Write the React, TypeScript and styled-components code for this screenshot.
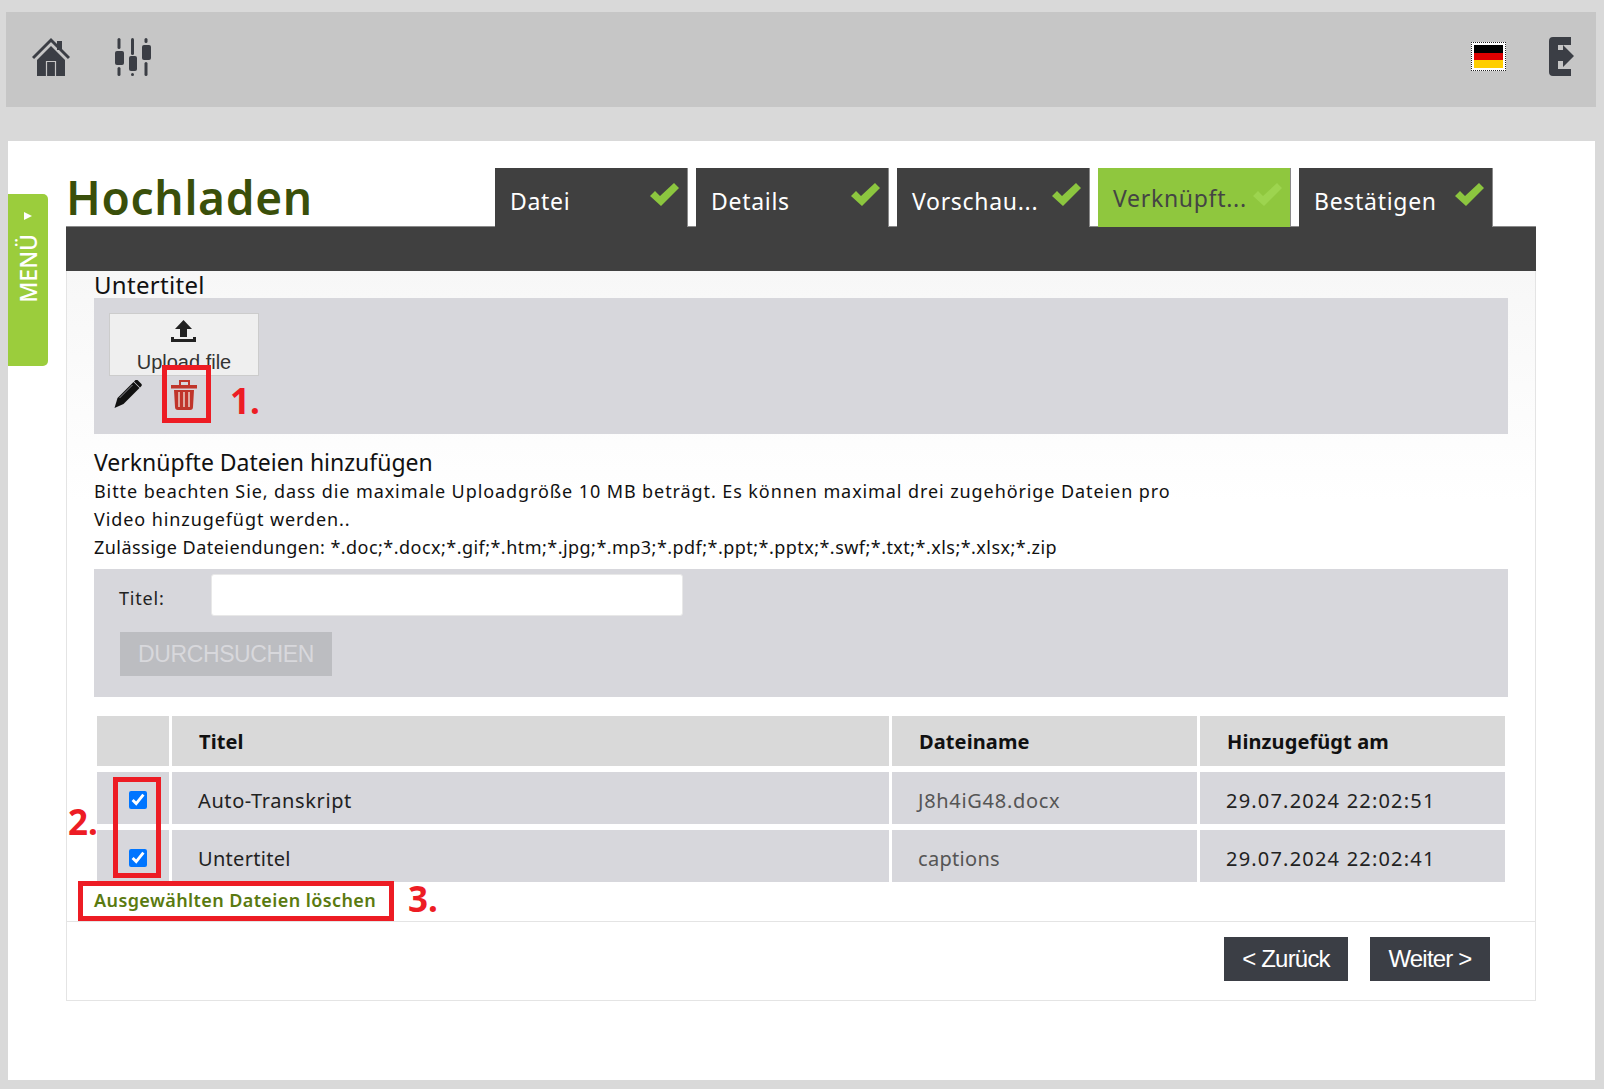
import React from "react";
import styled, { createGlobalStyle } from "styled-components";

const GlobalStyle = createGlobalStyle`
  html, body {
    margin: 0;
    padding: 0;
    background: #d9d9d9;
    font-family: "Noto Sans", "Open Sans", sans-serif;
  }
  * { box-sizing: border-box; }
`;

const Page = styled.div`
  width: 1604px;
  height: 1089px;
  overflow: hidden;
  padding-top: 12px;
`;

const TopBar = styled.header`
  display: flex;
  align-items: flex-start;
  width: 1590px;
  height: 95px;
  margin-left: 6px;
  padding-top: 25px;
  background: #c6c6c6;
`;

const TopLeft = styled.div`
  display: flex;
  gap: 45px;
  margin-left: 26px;
`;

const TopRight = styled.div`
  display: flex;
  margin-left: auto;
  margin-right: 22px;
`;

const Flag = styled.div`
  width: 35px;
  height: 29px;
  margin: 5px 43px 0 0;
  border: 1px dotted #222;
  padding: 2px;
  background: #fff;
  &::before {
    content: "";
    display: block;
    height: 100%;
    background: linear-gradient(#000 33%, #dd0000 33%, #dd0000 67%, #ffce00 67%);
  }
`;

const Card = styled.main`
  display: flex;
  align-items: flex-start;
  width: 1587px;
  height: 939px;
  margin: 34px 0 0 8px;
  background: #fff;
`;

const SideTab = styled.div`
  display: flex;
  flex-direction: column;
  align-items: center;
  flex: none;
  width: 40px;
  height: 172px;
  margin-top: 53px;
  padding-top: 18px;
  gap: 14px;
  background: #9bcd3c;
  border-radius: 0 5px 5px 0;
  color: #fff;
`;

const SideArrow = styled.span`
  width: 0;
  height: 0;
  border-left: 8px solid #fff;
  border-top: 4px solid transparent;
  border-bottom: 4px solid transparent;
`;

const SideLabel = styled.span`
  writing-mode: vertical-rl;
  transform: rotate(180deg);
  font-size: 23px;
  font-weight: 500;
  line-height: 1;
`;

const Main = styled.div`
  width: 1470px;
  margin-left: 18px;
  padding-top: 27px;
`;

const HeaderRow = styled.div`
  display: flex;
  height: 59px;
  border-bottom: 1px solid #8a8a8a;
`;

const Title = styled.h1`
  width: 429px;
  margin: 0;
  font-size: 46px;
  font-weight: 600;
  letter-spacing: 0.7px;
  line-height: 58px;
  color: #3a4f0a;
`;

const Tabs = styled.div`
  display: flex;
  gap: 8px;
  height: 59px;
`;

const Tab = styled.div<{ $active?: boolean }>`
  display: flex;
  justify-content: space-between;
  width: 193px;
  padding: ${({ $active }) => ($active ? "13px" : "16px")} 8px 0 15px;
  background: ${({ $active }) => ($active ? "#8fc73e" : "#404040")};
  border-right: 1px solid #8a8a8a;
  color: ${({ $active }) => ($active ? "#444" : "#fff")};
  font-size: 23px;
  letter-spacing: 0.7px;
  line-height: 34px;
  &:last-child {
    width: 194px;
  }
`;

const TabCheck = styled.svg<{ $active?: boolean }>`
  width: 29px;
  height: 23px;
  margin-top: ${({ $active }) => ($active ? "2px" : "-1px")};
  fill: ${({ $active }) => ($active ? "#9dd44f" : "#8cc63f")};
`;

const Band = styled.div`
  height: 44px;
  background: #404040;
`;

const Box = styled.div`
  border: 1px solid #e4e4e4;
  border-top: 0;
  background: linear-gradient(#f7f7f7, #fff 230px);
`;

const Body = styled.div`
  padding: 0 27px;
`;

const FieldLabel = styled.div`
  height: 27px;
  font-size: 24px;
  letter-spacing: 0.3px;
  line-height: 27px;
  color: #111;
`;

const UploadPanel = styled.div`
  position: relative;
  height: 136px;
  padding: 15px;
  background: #d7d7dc;
`;

const UploadButton = styled.div`
  display: flex;
  flex-direction: column;
  align-items: center;
  width: 150px;
  height: 63px;
  padding-top: 6px;
  background: #efefef;
  border: 1px solid #ccc;
  font-family: "Liberation Sans", Arial, sans-serif;
  font-size: 20px;
  line-height: 26px;
  color: #333;
`;

const UploadIcon = styled.svg`
  width: 25px;
  height: 22px;
  margin: 0 2px 7px 0;
`;

const Actions = styled.div`
  display: flex;
  gap: 29px;
  margin: 4px 0 0 5px;
`;

const RedBox = styled.div`
  position: absolute;
  border: 5px solid #ed1c24;
`;

const TrashBox = styled(RedBox)`
  left: 68px;
  top: 67px;
  width: 49px;
  height: 58px;
`;

const CheckBox2 = styled(RedBox)`
  left: 19px;
  top: 67px;
  width: 48px;
  height: 101px;
`;

const LinkBox = styled(RedBox)`
  left: -16px;
  top: -1px;
  width: 316px;
  height: 40px;
`;

const Callout = styled.span`
  position: absolute;
  color: #ed1c24;
  font-size: 35px;
  font-weight: 700;
  line-height: 35px;
`;

const Callout1 = styled(Callout)`
  left: 136px;
  top: 85px;
`;

const Callout2 = styled(Callout)`
  left: -26px;
  top: 94px;
`;

const Callout3 = styled(Callout)`
  left: 314px;
  top: -1px;
`;

const Section = styled.h2`
  margin: 13px 0 0;
  font-size: 23px;
  font-weight: 400;
  line-height: 30px;
  color: #111;
`;

const Note = styled.p<{ $spacing: number }>`
  margin: 0;
  width: 1100px;
  font-size: 18px;
  letter-spacing: ${({ $spacing }) => $spacing}px;
  line-height: 28px;
  color: #111;
`;

const SearchPanel = styled.div`
  height: 128px;
  margin-top: 8px;
  padding: 5px 0 0 25px;
  background: #d7d7dc;
`;

const SearchRow = styled.div`
  display: flex;
  align-items: center;
  height: 42px;
`;

const SearchLabel = styled.label`
  width: 92px;
  padding-top: 6px;
  font-size: 18px;
  letter-spacing: 0.8px;
  color: #222;
`;

const SearchInput = styled.input`
  width: 472px;
  height: 42px;
  border: 1px solid #e8e8e8;
  border-radius: 3px;
  background: #fff;
  outline: none;
`;

const SearchButton = styled.button`
  display: block;
  width: 212px;
  height: 44px;
  margin: 16px 0 0 1px;
  padding: 0;
  border: 0;
  background: #bcbdc1;
  color: #d8d8dc;
  font-family: "Liberation Sans", Arial, sans-serif;
  font-size: 23px;
  letter-spacing: -0.4px;
`;

const FilesWrap = styled.div`
  position: relative;
`;

const FileTable = styled.table`
  width: 1414px;
  margin: 13px 0 -6px;
  table-layout: fixed;
  border-collapse: separate;
  border-spacing: 3px 6px;
`;

const HeadCell = styled.th`
  height: 50px;
  padding: 0 0 0 27px;
  background: #d9d9d9;
  text-align: left;
  font-size: 20px;
  font-weight: 700;
  letter-spacing: 0.1px;
  color: #111;
`;

const Cell = styled.td<{ $spacing: number; $muted?: boolean }>`
  height: 52px;
  padding: 5px 0 0 26px;
  background: #d7d7dc;
  font-size: 20px;
  letter-spacing: ${({ $spacing }) => $spacing}px;
  color: ${({ $muted }) => ($muted ? "#555" : "#222")};
`;

const CheckCell = styled.td`
  height: 52px;
  padding: 0 0 0 32px;
  background: #d7d7dc;
`;

const RowCheck = styled.input`
  display: block;
  width: 18px;
  height: 18px;
  margin: 4px 0 0;
`;

const DeleteRow = styled.div`
  position: relative;
  height: 39px;
`;

const DeleteLink = styled.a`
  display: block;
  font-size: 18px;
  font-weight: 600;
  letter-spacing: 0.4px;
  line-height: 36px;
  color: #5a7a10;
`;

const Footer = styled.div`
  display: flex;
  justify-content: flex-end;
  gap: 22px;
  height: 79px;
  padding: 15px 45px 0 0;
  border-top: 1px solid #e4e4e4;
`;

const NavButton = styled.button<{ $width: number }>`
  width: ${({ $width }) => $width}px;
  height: 44px;
  padding: 0;
  border: 0;
  background: #3b3e45;
  color: #fff;
  font-family: "Liberation Sans", Arial, sans-serif;
  font-size: 24px;
  letter-spacing: -0.8px;
`;

const HomeIcon = () => (
  <svg width="38" height="39" viewBox="0 0 38 39">
    <path d="M25 4h5v9h-5z" fill="#3b3e45" />
    <path d="M1 21 19 3l18 18" fill="none" stroke="#3b3e45" strokeWidth="3" />
    <path d="M5 23 19 9l14 14v16H5z" fill="#3b3e45" />
    <path d="M14.500 39V24.500h9V39" fill="none" stroke="#c6c6c6" strokeWidth="1.200" />
  </svg>
);

const SlidersIcon = () => (
  <svg width="36" height="39" viewBox="0 0 36 39" fill="#3b3e45">
    <rect x="2.500" y="1" width="3" height="11" rx="1.500" />
    <rect x="0" y="14" width="9" height="14" rx="2" />
    <rect x="2.500" y="30" width="3" height="9" rx="1.500" />
    <rect x="16" y="1" width="3" height="17" rx="1.500" />
    <rect x="14" y="19" width="8" height="15" rx="2" />
    <rect x="16" y="36" width="3" height="3" rx="1.500" />
    <rect x="29.500" y="1" width="3" height="5" rx="1.500" />
    <rect x="27" y="8" width="9" height="15" rx="2" />
    <rect x="29.500" y="25" width="3" height="14" rx="1.500" />
  </svg>
);

const LogoutIcon = () => (
  <svg width="25" height="39" viewBox="0 0 25 39" fill="#3b3e45">
    <path d="M4 0h18v8H9v24h13v7H4a4 4 0 0 1-4-4V4a4 4 0 0 1 4-4z" />
    <path d="M9 13h5V8l11 11-11 11v-6H9z" />
  </svg>
);

const PencilIcon = () => (
  <svg width="28" height="28" viewBox="0 0 27 28">
    <path d="M0 28 3 18 19 2l6 6L9 24z" fill="#111" />
    <path d="M20.500 0.500a2 2 0 0 1 3 0l3 3a2 2 0 0 1 0 3l-1 1-6-6z" fill="#111" />
    <path d="M5 18 18 5" stroke="#8a8a90" strokeWidth="1" />
  </svg>
);

const TrashIcon = () => (
  <svg width="26" height="30" viewBox="0 0 26 30">
    <rect x="9" y="1" width="9" height="5" fill="none" stroke="#c0352b" strokeWidth="2" />
    <rect x="0" y="5" width="26" height="3.500" fill="#c0352b" />
    <path d="M3 10h20l-1 17a3 3 0 0 1-3 3H7a3 3 0 0 1-3-3z" fill="#c0352b" />
    <path d="M7 12h2v15H7zM12 12h2v15h-2zM17 12h2v15h-2z" fill="#e0a9a0" />
  </svg>
);

const CHECK = "0,13 5,8 10,13 24,0 29,5 11,23";

const steps = [
  { label: "Datei" },
  { label: "Details" },
  { label: "Vorschau..." },
  { label: "Verknüpft...", active: true },
  { label: "Bestätigen" },
];

const files = [
  { title: "Auto-Transkript", titleSpacing: 0.6, name: "J8h4iG48.docx", nameSpacing: 0.7, added: "29.07.2024 22:02:51" },
  { title: "Untertitel", titleSpacing: 0.3, name: "captions", nameSpacing: 0.3, added: "29.07.2024 22:02:41" },
];

export default function App() {
  return (
    <Page>
      <GlobalStyle />
      <TopBar>
        <TopLeft>
          <HomeIcon />
          <SlidersIcon />
        </TopLeft>
        <TopRight>
          <Flag />
          <LogoutIcon />
        </TopRight>
      </TopBar>
      <Card>
        <SideTab>
          <SideArrow />
          <SideLabel>MENÜ</SideLabel>
        </SideTab>
        <Main>
          <HeaderRow>
            <Title>Hochladen</Title>
            <Tabs>
              {steps.map((step) => (
                <Tab key={step.label} $active={step.active}>
                  {step.label}
                  <TabCheck $active={step.active} viewBox="0 0 29 23">
                    <polygon points={CHECK} />
                  </TabCheck>
                </Tab>
              ))}
            </Tabs>
          </HeaderRow>
          <Band />
          <Box>
            <Body>
              <FieldLabel>Untertitel</FieldLabel>
              <UploadPanel>
                <UploadButton>
                  <UploadIcon viewBox="0 0 25 22" fill="#222">
                    <path d="M12.500 0 21 9h-5v8H9V9H4z" />
                    <path d="M0 17h3v2h19v-2h3v5H0z" />
                  </UploadIcon>
                  Upload file
                </UploadButton>
                <Actions>
                  <PencilIcon />
                  <TrashIcon />
                </Actions>
                <TrashBox />
                <Callout1>1.</Callout1>
              </UploadPanel>
              <Section>Verknüpfte Dateien hinzufügen</Section>
              <Note $spacing={0.91}>
                Bitte beachten Sie, dass die maximale Uploadgröße 10 MB beträgt. Es können maximal drei
                zugehörige Dateien pro Video hinzugefügt werden..
              </Note>
              <Note $spacing={0.46}>Zulässige Dateiendungen: *.doc;*.docx;*.gif;*.htm;*.jpg;*.mp3;*.pdf;*.ppt;*.pptx;*.swf;*.txt;*.xls;*.xlsx;*.zip</Note>
              <SearchPanel>
                <SearchRow>
                  <SearchLabel>Titel:</SearchLabel>
                  <SearchInput />
                </SearchRow>
                <SearchButton>DURCHSUCHEN</SearchButton>
              </SearchPanel>
              <FilesWrap>
                <FileTable>
                  <colgroup>
                    <col style={{ width: 72 }} />
                    <col style={{ width: 717 }} />
                    <col style={{ width: 305 }} />
                    <col style={{ width: 305 }} />
                  </colgroup>
                  <thead>
                    <tr>
                      <HeadCell />
                      <HeadCell>Titel</HeadCell>
                      <HeadCell>Dateiname</HeadCell>
                      <HeadCell>Hinzugefügt am</HeadCell>
                    </tr>
                  </thead>
                  <tbody>
                    {files.map((file) => (
                      <tr key={file.title}>
                        <CheckCell>
                          <RowCheck type="checkbox" defaultChecked />
                        </CheckCell>
                        <Cell $spacing={file.titleSpacing}>{file.title}</Cell>
                        <Cell $spacing={file.nameSpacing} $muted>{file.name}</Cell>
                        <Cell $spacing={1.2}>{file.added}</Cell>
                      </tr>
                    ))}
                  </tbody>
                </FileTable>
                <CheckBox2 />
                <Callout2>2.</Callout2>
              </FilesWrap>
              <DeleteRow>
                <DeleteLink>Ausgewählten Dateien löschen</DeleteLink>
                <LinkBox />
                <Callout3>3.</Callout3>
              </DeleteRow>
            </Body>
            <Footer>
              <NavButton $width={124}>&lt; Zurück</NavButton>
              <NavButton $width={120}>Weiter &gt;</NavButton>
            </Footer>
          </Box>
        </Main>
      </Card>
    </Page>
  );
}
